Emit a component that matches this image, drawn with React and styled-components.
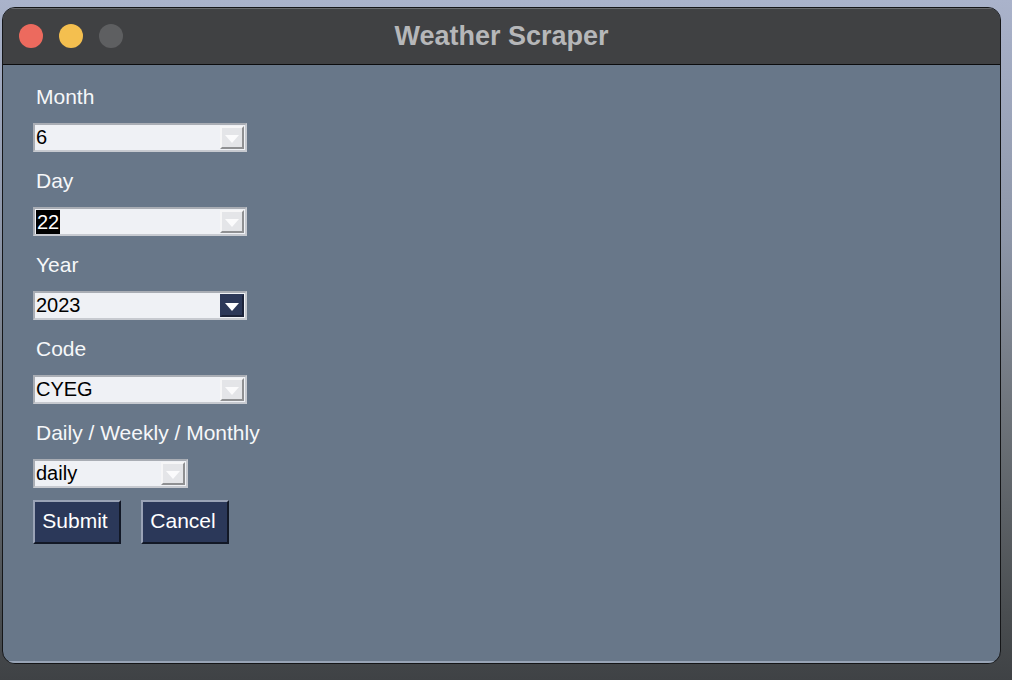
import React from "react";
import styled, { createGlobalStyle } from "styled-components";

const Global = createGlobalStyle`
  html, body {
    margin: 0;
    padding: 0;
    height: 680px;
    overflow: hidden;
  }
  body {
    font-family: "Liberation Sans", Arial, sans-serif;
    background: linear-gradient(180deg, #aab3cb 0%, #8d96a8 35%, #6f757c 60%, #4a4e51 90%, #3f4245 100%);
  }
`;

const Window = styled.div`
  margin: 7px 11px 0 2px;
  height: 657px;
  box-sizing: border-box;
  border: 1px solid #151618;
  border-radius: 13px;
  overflow: hidden;
  display: flex;
  flex-direction: column;
  background: #687789;
`;

const TitleBar = styled.div`
  height: 56px;
  flex: none;
  background: #404143;
  border-bottom: 1px solid #0c0c0d;
  box-shadow: inset 0 1px 0 #6a6b6e;
  display: flex;
  align-items: center;
  position: relative;
  padding-left: 16px;
  gap: 16px;
`;

const Light = styled.span`
  width: 24px;
  height: 24px;
  border-radius: 50%;
  background: ${(p) => p.color};
`;

const Title = styled.div`
  position: absolute;
  left: 0;
  right: 0;
  top: 0;
  bottom: 0;
  display: flex;
  align-items: center;
  justify-content: center;
  font-size: 27px;
  font-weight: 700;
  color: #b6b7b9;
  pointer-events: none;
`;

const Body = styled.div`
  flex: 1;
  padding: 17px 0 0 30px;
  display: flex;
  flex-direction: column;
  align-items: flex-start;
  box-shadow: inset 0 -2px 0 #98a4b6;
`;

const Label = styled.div`
  height: 30px;
  line-height: 30px;
  font-size: 21px;
  color: #f6f7f9;
  padding-left: 3px;
  margin-bottom: 11px;
`;

const Combo = styled.div`
  width: ${(p) => p.width}px;
  height: 29px;
  box-sizing: border-box;
  border: 2px solid #a9adb4;
  border-right-color: #c7cad0;
  border-bottom-color: #c7cad0;
  background: #eff1f5;
  display: flex;
  align-items: stretch;
  margin-bottom: ${(p) => p.gap ?? 14}px;
`;

const Value = styled.div`
  flex: 1;
  display: flex;
  align-items: center;
  padding-left: 1px;
  font-size: 20px;
  color: #000;
`;

const Selected = styled.span`
  background: #000;
  color: #fff;
  padding: 1px 1px 0;
  line-height: 23px;
`;

const Arrow = styled.div`
  width: 24px;
  flex: none;
  box-sizing: border-box;
  margin: 1px 1px 1px 0;
  background: ${(p) => (p.active ? "#2c3858" : "#e4e5e8")};
  border: 2px solid ${(p) => (p.active ? "#2c3858" : "#f6f6f7")};
  border-right-color: ${(p) => (p.active ? "#1b2238" : "#8f9092")};
  border-bottom-color: ${(p) => (p.active ? "#1b2238" : "#8f9092")};
  display: flex;
  align-items: center;
  justify-content: center;
  &::after {
    content: "";
    width: 0;
    height: 0;
    border-left: 7px solid transparent;
    border-right: 7px solid transparent;
    border-top: 8px solid ${(p) => (p.active ? "#ffffff" : "#fbfbfc")};
    margin-top: 2px;
  }
`;

const Buttons = styled.div`
  display: flex;
  gap: 20px;
`;

const Button = styled.button`
  width: ${(p) => p.width}px;
  height: 44px;
  box-sizing: border-box;
  background: #2b3859;
  border: 2px solid #9aa3b6;
  border-right-color: #121826;
  border-bottom-color: #121826;
  color: #fff;
  font-family: "Liberation Sans", Arial, sans-serif;
  font-size: 21px;
  padding: 0 4px 2px 0;
  text-align: center;
`;

const fields = [
  { label: "Month", value: "6", width: 214 },
  { label: "Day", value: "22", width: 214, selected: true },
  { label: "Year", value: "2023", width: 214, active: true },
  { label: "Code", value: "CYEG", width: 214 },
  { label: "Daily / Weekly / Monthly", value: "daily", width: 155, gap: 12 },
];

export default function App() {
  return (
    <>
      <Global />
      <Window>
        <TitleBar>
          <Light color="#ec6a5e" />
          <Light color="#f4bf4f" />
          <Light color="#5e5f61" />
          <Title>Weather Scraper</Title>
        </TitleBar>
        <Body>
          {fields.map((f) => (
            <React.Fragment key={f.label}>
              <Label>{f.label}</Label>
              <Combo width={f.width} gap={f.gap}>
                <Value>{f.selected ? <Selected>{f.value}</Selected> : f.value}</Value>
                <Arrow active={f.active} />
              </Combo>
            </React.Fragment>
          ))}
          <Buttons>
            <Button width={88}>Submit</Button>
            <Button width={88}>Cancel</Button>
          </Buttons>
        </Body>
      </Window>
    </>
  );
}
